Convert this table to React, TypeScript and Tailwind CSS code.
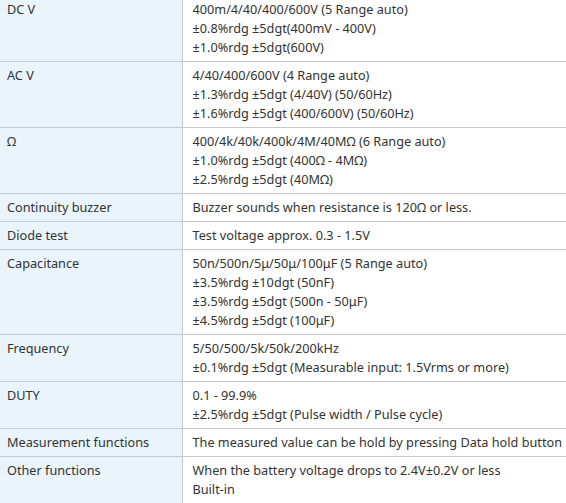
const rows: { label: string; lines: string[] }[] = [
  {
    label: "DC V",
    lines: [
      "400m/4/40/400/600V (5 Range auto)",
      "±0.8%rdg ±5dgt(400mV - 400V)",
      "±1.0%rdg ±5dgt(600V)",
    ],
  },
  {
    label: "AC V",
    lines: [
      "4/40/400/600V (4 Range auto)",
      "±1.3%rdg ±5dgt (4/40V) (50/60Hz)",
      "±1.6%rdg ±5dgt (400/600V) (50/60Hz)",
    ],
  },
  {
    label: "Ω",
    lines: [
      "400/4k/40k/400k/4M/40MΩ (6 Range auto)",
      "±1.0%rdg ±5dgt (400Ω - 4MΩ)",
      "±2.5%rdg ±5dgt (40MΩ)",
    ],
  },
  {
    label: "Continuity buzzer",
    lines: ["Buzzer sounds when resistance is 120Ω or less."],
  },
  { label: "Diode test", lines: ["Test voltage approx. 0.3 - 1.5V"] },
  {
    label: "Capacitance",
    lines: [
      "50n/500n/5μ/50μ/100μF (5 Range auto)",
      "±3.5%rdg ±10dgt (50nF)",
      "±3.5%rdg ±5dgt (500n - 50μF)",
      "±4.5%rdg ±5dgt (100μF)",
    ],
  },
  {
    label: "Frequency",
    lines: [
      "5/50/500/5k/50k/200kHz",
      "±0.1%rdg ±5dgt (Measurable input: 1.5Vrms or more)",
    ],
  },
  {
    label: "DUTY",
    lines: ["0.1 - 99.9%", "±2.5%rdg ±5dgt (Pulse width / Pulse cycle)"],
  },
  {
    label: "Measurement functions",
    lines: ["The measured value can be hold by pressing Data hold button"],
  },
  {
    label: "Other functions",
    lines: ["When the battery voltage drops to 2.4V±0.2V or less", "Built-in"],
  },
];

export default function App() {
  return (
    <div className="h-[503px] w-[566px] overflow-hidden bg-white">
      <table className="-mt-[4px] w-full table-fixed border-collapse font-['Noto_Sans',sans-serif] text-[12.7px] leading-[19px] text-[#333]">
        <tbody>
          {rows.map((row) => (
            <tr key={row.label} className="border-b border-[#c9c9c9]">
              <th className="w-[182px] border-r border-[#c9c9c9] bg-[#e9f4fc] py-[4px] pl-[7px] text-left align-top font-normal whitespace-nowrap">
                {row.label}
              </th>
              <td className="py-[4px] pl-[10px] align-top whitespace-nowrap">
                {row.lines.map((line) => (
                  <div key={line}>{line}</div>
                ))}
              </td>
            </tr>
          ))}
        </tbody>
      </table>
    </div>
  );
}
